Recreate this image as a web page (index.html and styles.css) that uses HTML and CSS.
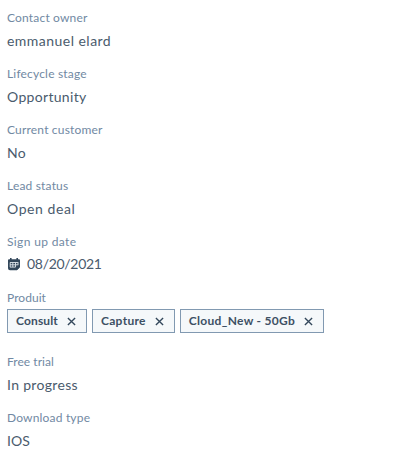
FILE: index.html
```html
<!DOCTYPE html>
<html lang="en">
<head>
<meta charset="utf-8">
<title>Contact properties</title>
<link rel="stylesheet" href="styles.css">
</head>
<body>
<dl class="properties">
  <div class="property"><dt class="label">Contact owner</dt><dd class="value wider">emmanuel elard</dd></div>
  <div class="property"><dt class="label">Lifecycle stage</dt><dd class="value">Opportunity</dd></div>
  <div class="property"><dt class="label">Current customer</dt><dd class="value">No</dd></div>
  <div class="property"><dt class="label">Lead status</dt><dd class="value widest">Open deal</dd></div>
  <div class="property"><dt class="label loose">Sign up date</dt><dd class="value date">
    <svg class="calendar" viewBox="0 0 14 14" aria-hidden="true"><path fill="#33475b" d="M3 1h1.6v1.2h4.8V1H11v1.2h1q1 0 1 1V10l-3.2 3.2H3q-2 0-2-2v-8q0-1 1-1h1z"/><path fill="none" stroke="#dfe5eb" stroke-width=".9" d="M3 5.5h8.3M3 7.8h8.3M3 10.1h5.5M3.2 5.5v4.6M5.8 5.5v4.6M8.5 5.5v4.6M11 5.5v2.3"/><path fill="#33475b" d="M9.8 13.2v-2q0-.9.9-.9H13z"/></svg>08/20/2021</dd></div>
  <div class="property tags-property"><dt class="label snug">Produit</dt><dd class="tags">
    <span class="tag first-tag">Consult<svg class="close" viewBox="0 0 10 10"><path d="M1 1l8 8M9 1l-8 8"/></svg></span>
    <span class="tag">Capture<svg class="close" viewBox="0 0 10 10"><path d="M1 1l8 8M9 1l-8 8"/></svg></span>
    <span class="tag">Cloud_New - 50Gb<svg class="close" viewBox="0 0 10 10"><path d="M1 1l8 8M9 1l-8 8"/></svg></span></dd></div>
  <div class="property"><dt class="label snug">Free trial</dt><dd class="value">In progress</dd></div>
  <div class="property"><dt class="label">Download type</dt><dd class="value snug">IOS</dd></div>
</dl>
</body>
</html>
```
FILE: styles.css
```css
body { margin: 0; background: #fff; font-family: Lato, sans-serif; color: #33475b; }
.properties { margin: 0; padding: 8px 7px; }
.property { height: 56px; }
.tags-property { height: 64px; }
.label { height: 20px; line-height: 20px; font-size: 12px; letter-spacing: .18px; color: #7189a3; }
.value { margin: 0; height: 26px; line-height: 26px; font-size: 14px; letter-spacing: .32px; color: #4a5b6d; }
.wider { letter-spacing: .47px; }
.widest { letter-spacing: .57px; }
.loose { letter-spacing: .36px; }
.snug { letter-spacing: .04px; }
.date { display: flex; align-items: center; height: 24px; line-height: 24px; letter-spacing: -.3px; }
.calendar { width: 14px; height: 14px; margin-right: 6px; }
.tags { margin: 1px 0 0; display: flex; gap: 5px; }
.tag { box-sizing: border-box; height: 24px; display: flex; align-items: center; gap: 9.2px; padding: 0 9.8px 0 8px; border: 1px solid #8199b1; background: #f5f8fa; color: #3d5064; font-size: 12px; line-height: 20px; font-weight: 700; letter-spacing: .31px; white-space: nowrap; }
.first-tag { letter-spacing: .14px; }
.close { width: 9px; height: 9px; stroke: #33475b; stroke-width: 1.5; fill: none; }
```
